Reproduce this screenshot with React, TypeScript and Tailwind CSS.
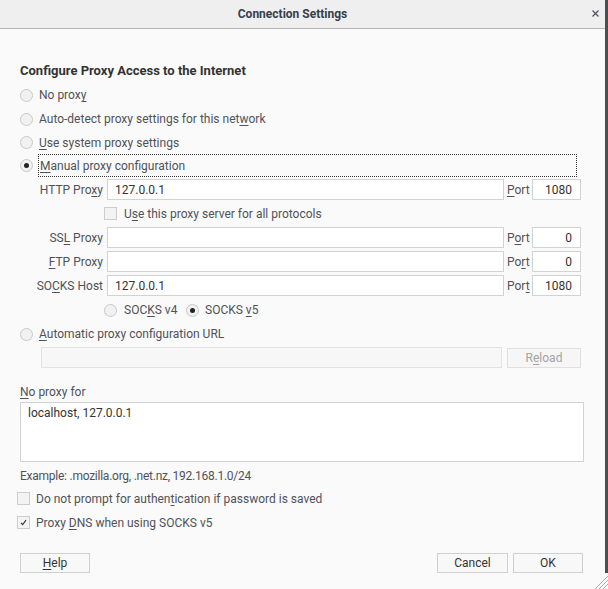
import type { ReactNode } from "react";

// Mnemonic letter: underlined like a GTK accelerator
function U({ children }: { children: ReactNode }) {
  return <span className="underline underline-offset-2 decoration-1">{children}</span>;
}

function Radio({ checked = false }: { checked?: boolean }) {
  return (
    <span className="w-[13px] h-[13px] shrink-0 rounded-full border border-[#c9c9c9] bg-[#f1f1f1] flex items-center justify-center">
      {checked && <span className="w-[5px] h-[5px] rounded-full bg-[#222]" />}
    </span>
  );
}

function Check({ checked = false }: { checked?: boolean }) {
  return (
    <span className="w-[13px] h-[13px] shrink-0 border border-[#cdcdcd] bg-[#f3f3f3] flex items-center justify-center">
      {checked && (
        <svg width="9" height="9" viewBox="0 0 9 9">
          <path d="M2 4.8 L3.7 6.6 L7 2.2" fill="none" stroke="#333" strokeWidth="1.1" />
        </svg>
      )}
    </span>
  );
}

function ProxyRow({ label, value, port }: { label: ReactNode; value: string; port: ReactNode }) {
  return (
    <div className="flex items-center h-[21px]">
      <div className="w-[84px] text-right pr-px">{label}</div>
      <div className="ml-[3px] w-[397px] h-full border border-[#d2d2d2] bg-white pl-[7px] flex items-center text-[#333]">
        {value}
      </div>
      <div className="ml-[3px] w-[25px]">{port}</div>
      <div className="w-[49px] h-full border border-[#d2d2d2] bg-white pr-[8px] flex items-center justify-end text-[#333]">
        {value ? "1080" : "0"}
      </div>
    </div>
  );
}

export default function App() {
  return (
    <div className="w-[608px] h-[589px] bg-[#fafafa] flex relative text-[12px] text-[#505258] font-['Roboto','Liberation_Sans',sans-serif] overflow-hidden">
      <div className="w-[605px] flex flex-col">
        {/* title bar */}
        <div className="h-[29px] bg-[#efefef] border-b border-[#b7b7b7] flex items-center justify-center relative">
          <span className="font-bold text-[#36404c] ml-[-20px]">Connection Settings</span>
          <svg className="absolute left-[592px] top-[10px]" width="7" height="7" viewBox="0 0 7 7">
            <path d="M0.5 0.5 L6.5 6.5 M6.5 0.5 L0.5 6.5" stroke="#4a5563" strokeWidth="1.2" />
          </svg>
        </div>

        <div className="flex flex-col pl-[20px] pr-[21px] pt-[32px]">
          <div className="h-[22px] leading-[20px] font-bold text-[13px] text-[#333]">
            Configure Proxy Access to the Internet
          </div>

          <div className="h-[24px] flex items-center gap-[6px]">
            <Radio />
            <span>No prox<U>y</U></span>
          </div>
          <div className="h-[24px] flex items-center gap-[6px]">
            <Radio />
            <span>Auto-detect proxy settings for this net<U>w</U>ork</span>
          </div>
          <div className="h-[23px] flex items-center gap-[6px]">
            <Radio />
            <span><U>U</U>se system proxy settings</span>
          </div>
          <div className="h-[23px] flex items-center gap-[5px]">
            <Radio checked />
            <span className="w-[539px] h-full border border-dotted border-[#333] flex items-center pl-px">
              <U>M</U>anual proxy configuration
            </span>
          </div>

          {/* manual proxy fields */}
          <div className="mt-[2px]">
            <ProxyRow label={<>HTTP Pro<U>x</U>y</>} value="127.0.0.1" port={<><U>P</U>ort</>} />
          </div>
          <div className="h-[27px] flex items-center pl-[84px] gap-[7px]">
            <Check />
            <span>U<U>s</U>e this proxy server for all protocols</span>
          </div>
          <div className="flex flex-col gap-[3px]">
            <ProxyRow label={<>SS<U>L</U> Proxy</>} value="" port={<>P<U>o</U>rt</>} />
            <ProxyRow label={<><U>F</U>TP Proxy</>} value="" port={<>Po<U>r</U>t</>} />
            <ProxyRow label={<>SO<U>C</U>KS Host</>} value="127.0.0.1" port={<>Por<U>t</U></>} />
          </div>
          <div className="h-[28px] flex items-center pl-[84px]">
            <Radio />
            <span className="ml-[7px] w-[62px]">SOC<U>K</U>S v4</span>
            <Radio checked />
            <span className="ml-[6px]">SOCKS <U>v</U>5</span>
          </div>

          <div className="h-[20px] flex items-center gap-[6px]">
            <Radio />
            <span><U>A</U>utomatic proxy configuration URL</span>
          </div>
          <div className="mt-[3px] h-[21px] flex items-center pl-[21px]">
            <div className="w-[461px] h-full border border-[#e2e2e2] bg-[#f7f7f7]" />
            <div className="ml-[5px] w-[74px] h-[20px] mt-px border border-[#e0e0e0] bg-[#f6f6f6] text-[#a3a3a3] flex items-center justify-center">
              R<U>e</U>load
            </div>
          </div>

          <div className="mt-[13px] h-[21px] flex items-center">
            <span><U>N</U>o proxy for</span>
          </div>
          <div className="h-[60px] border border-[#d2d2d2] bg-white pl-[7px] pt-px text-[#333]">
            localhost, 127.0.0.1
          </div>

          <div className="mt-[4px] h-[20px] flex items-center tracking-[-0.25px]">
            Example: .mozilla.org, .net.nz, 192.168.1.0/24
          </div>
          <div className="h-[25px] flex items-center ml-[-3px] gap-[6px]">
            <Check />
            <span>Do not prompt for authen<U>t</U>ication if password is saved</span>
          </div>
          <div className="h-[23px] flex items-center ml-[-3px] gap-[6px]">
            <Check checked />
            <span>Proxy <U>D</U>NS when using SOCKS v5</span>
          </div>

          <div className="mt-[19px] flex items-center text-[#333]">
            <div className="w-[70px] h-[20px] border border-[#cfcfcf] bg-[#f8f8f8] flex items-center justify-center">
              <U>H</U>elp
            </div>
            <div className="ml-auto w-[71px] h-[20px] border border-[#cfcfcf] bg-[#f8f8f8] flex items-center justify-center">
              Cancel
            </div>
            <div className="ml-[5px] mr-px w-[70px] h-[20px] border border-[#cfcfcf] bg-[#f8f8f8] flex items-center justify-center">
              OK
            </div>
          </div>
        </div>
      </div>

      {/* window edge */}
      <div className="w-[3px] flex flex-col">
        <div className="h-[573px] bg-[#4e4e4e]" />
      </div>
      <svg className="absolute right-0 bottom-0" width="14" height="16" viewBox="0 0 14 16">
        <path d="M14 3 L1 16 M14 7 L5 16 M14 11 L9 16" stroke="#a8a8a8" strokeWidth="1" />
      </svg>
    </div>
  );
}
